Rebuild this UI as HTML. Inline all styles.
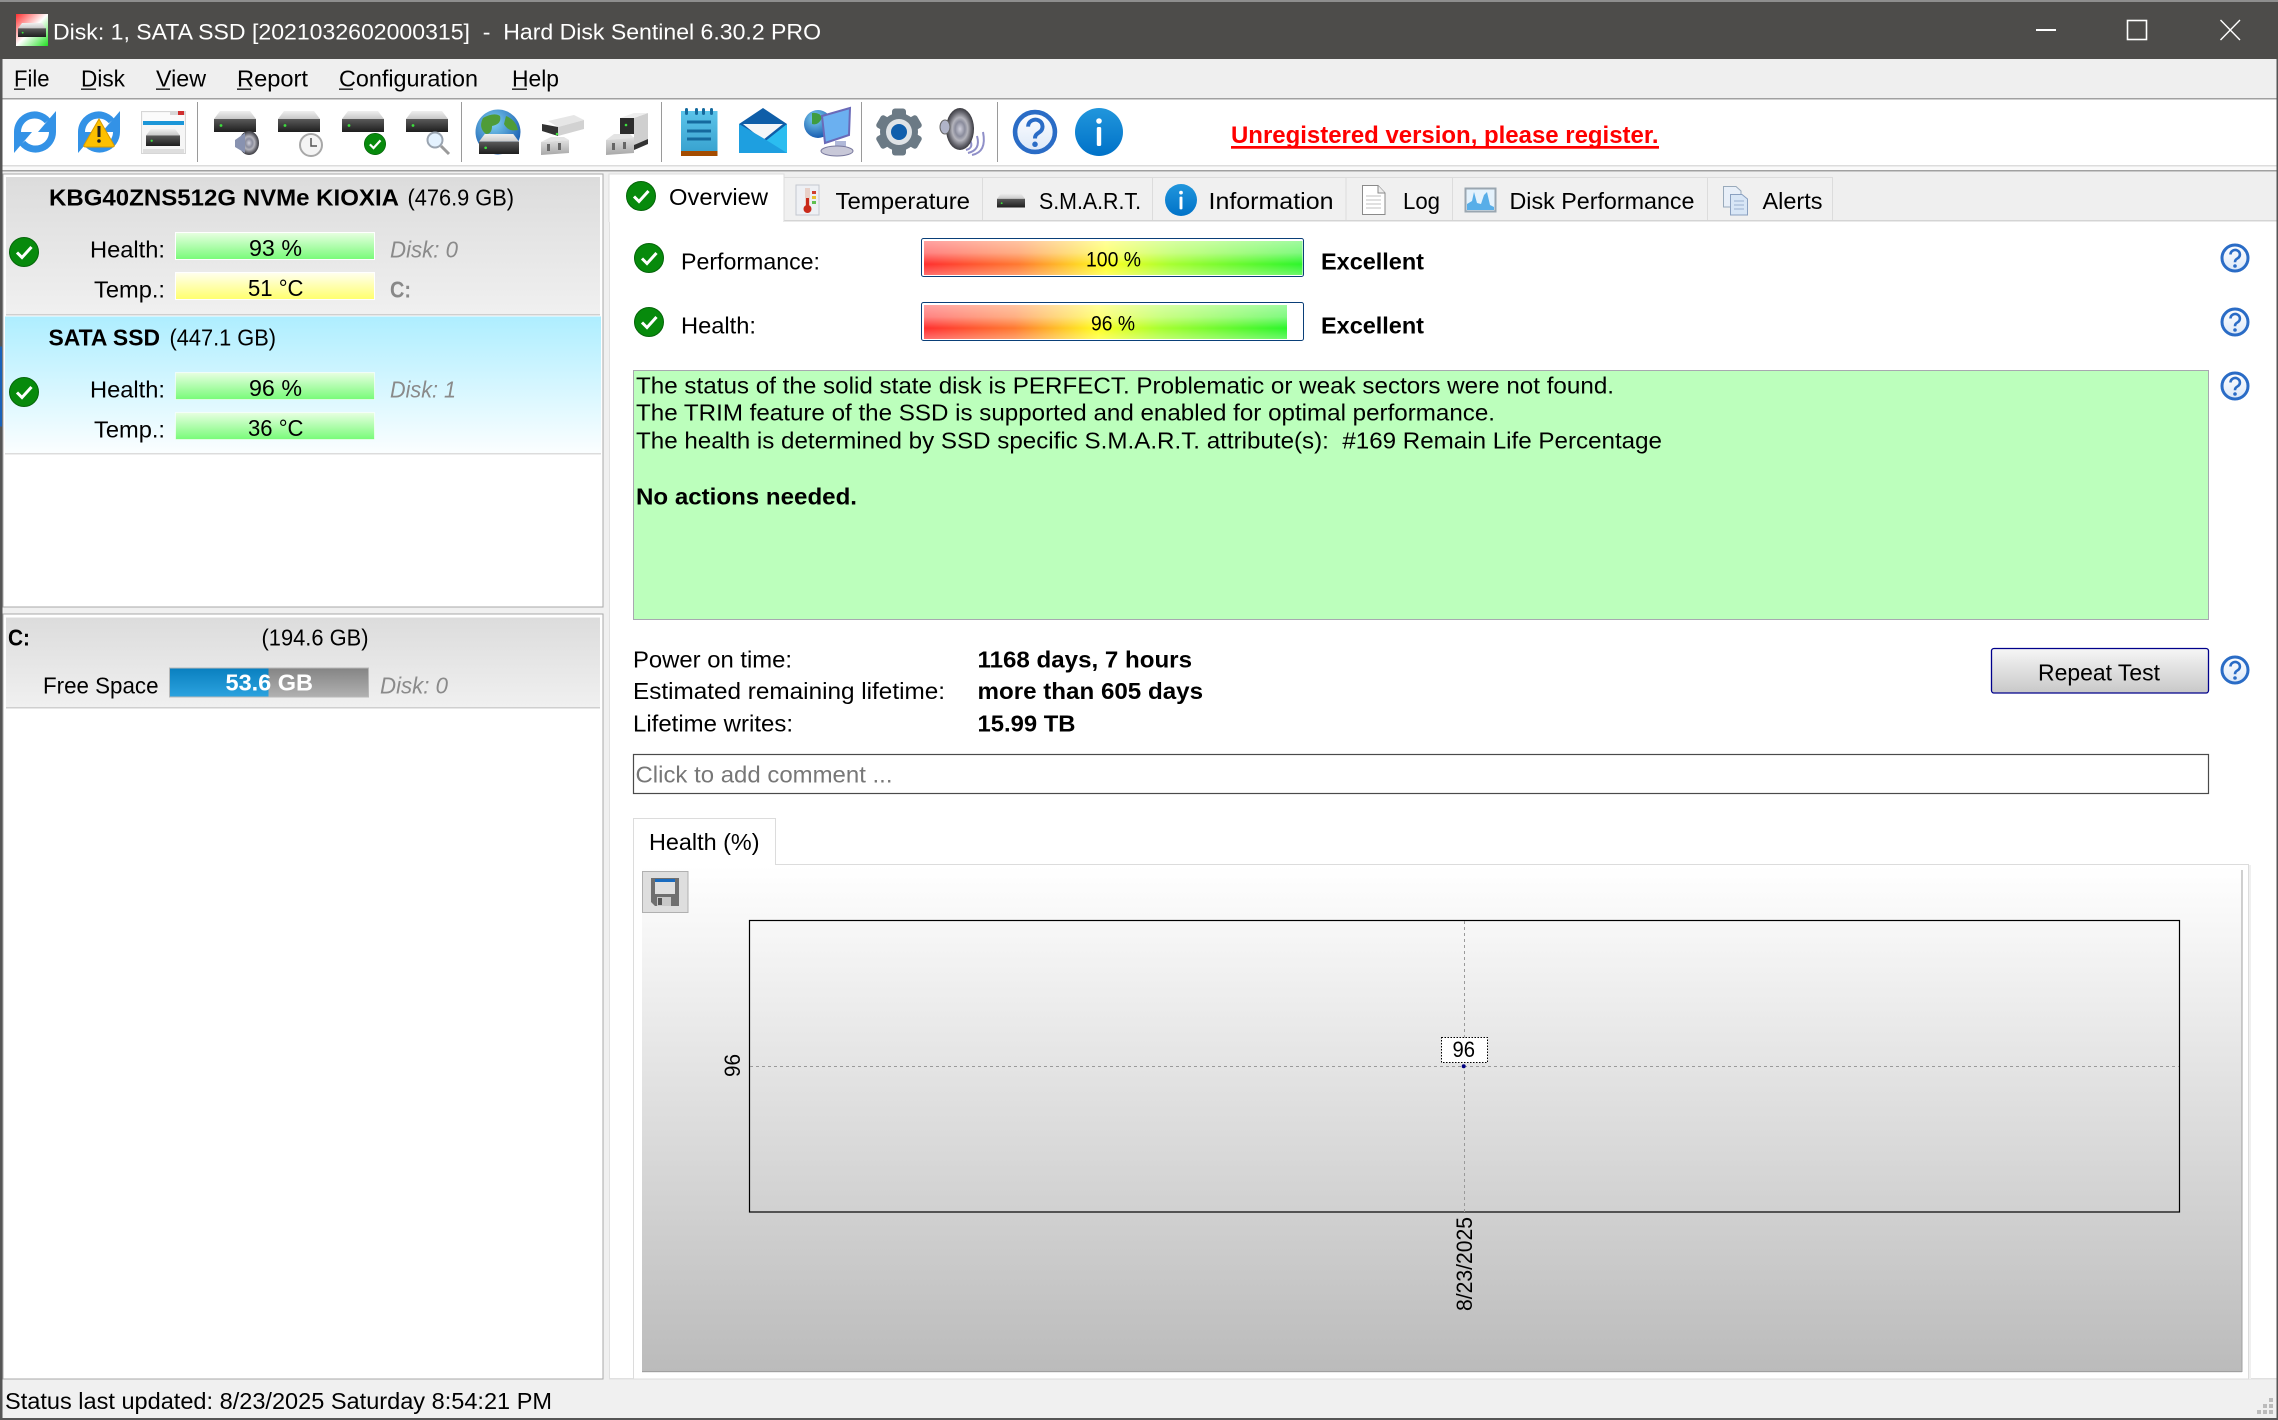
<!DOCTYPE html>
<html><head><meta charset="utf-8"><title>Hard Disk Sentinel</title>
<style>html,body{margin:0;padding:0;background:#f0f0f0;overflow:hidden}svg{display:block}
text{font-family:"Liberation Sans",sans-serif;font-size:23px;fill:#000;white-space:pre}
.b{font-weight:bold}.g{fill:#8a8a8a;font-style:italic}.t{fill:#fff}
</style></head><body>
<svg width="2278" height="1420" viewBox="0 0 2278 1420" xmlns="http://www.w3.org/2000/svg">
<defs>
<linearGradient id="vg" x1="0" y1="0" x2="0" y2="1"><stop offset="0" stop-color="#dcdcdc"/><stop offset="1" stop-color="#f0f0f0"/></linearGradient>
<linearGradient id="vb" x1="0" y1="0" x2="0" y2="1"><stop offset="0" stop-color="#aeeeff"/><stop offset="1" stop-color="#fbfeff"/></linearGradient>
<linearGradient id="gb" x1="0" y1="0" x2="0" y2="1"><stop offset="0" stop-color="#e8ffe2"/><stop offset="1" stop-color="#78fb78"/></linearGradient>
<linearGradient id="yb" x1="0" y1="0" x2="0" y2="1"><stop offset="0" stop-color="#fffff0"/><stop offset="1" stop-color="#ffff6c"/></linearGradient>
<linearGradient id="rg" x1="0" y1="0" x2="1" y2="0"><stop offset="0" stop-color="#ff2f2f"/><stop offset=".25" stop-color="#ff7a30"/><stop offset=".48" stop-color="#ffff20"/><stop offset=".65" stop-color="#a8ff30"/><stop offset="1" stop-color="#2cf52c"/></linearGradient>
<linearGradient id="sh" x1="0" y1="0" x2="0" y2="1"><stop offset="0" stop-color="#fff" stop-opacity=".55"/><stop offset=".35" stop-color="#fff" stop-opacity=".4"/><stop offset=".68" stop-color="#fff" stop-opacity="0"/><stop offset="1" stop-color="#fff" stop-opacity=".3"/></linearGradient>
<linearGradient id="chart" x1="0" y1="0" x2="0" y2="1"><stop offset="0" stop-color="#fff"/><stop offset="1" stop-color="#bbb"/></linearGradient>
<linearGradient id="btn" x1="0" y1="0" x2="0" y2="1"><stop offset="0" stop-color="#f6f6f6"/><stop offset="1" stop-color="#c8c8c8"/></linearGradient>
<linearGradient id="fb" x1="0" y1="0" x2="0" y2="1"><stop offset="0" stop-color="#0a80c0"/><stop offset="1" stop-color="#2ba2de"/></linearGradient>
<linearGradient id="fg" x1="0" y1="0" x2="0" y2="1"><stop offset="0" stop-color="#858585"/><stop offset="1" stop-color="#b0b0b0"/></linearGradient>
<linearGradient id="top" x1="0" y1="0" x2="0" y2="1"><stop offset="0" stop-color="#f0f0f0"/><stop offset="1" stop-color="#c8c8c8"/></linearGradient>
<linearGradient id="band" x1="0" y1="0" x2="0" y2="1"><stop offset="0" stop-color="#5a5a5a"/><stop offset="1" stop-color="#1e1e1e"/></linearGradient>
<linearGradient id="hp" x1="0" y1="0" x2="0" y2="1"><stop offset="0" stop-color="#fff"/><stop offset="1" stop-color="#dce8f8"/></linearGradient>
<linearGradient id="inf" x1="0" y1="0" x2="0" y2="1"><stop offset="0" stop-color="#2196dc"/><stop offset="1" stop-color="#0072c8"/></linearGradient>
<linearGradient id="note" x1="0" y1="0" x2="0" y2="1"><stop offset="0" stop-color="#5cc4ea"/><stop offset="1" stop-color="#39a3d0"/></linearGradient>
<linearGradient id="ic" x1="0" y1="0" x2="1" y2="1"><stop offset="0" stop-color="#ff3030"/><stop offset=".5" stop-color="#fff"/><stop offset="1" stop-color="#20e020"/></linearGradient>
<linearGradient id="tb" x1="0" y1="0" x2="0" y2="1"><stop offset="0" stop-color="#e0e0e0"/><stop offset="1" stop-color="#a8a8a8"/></linearGradient>
<radialGradient id="glb" cx=".4" cy=".3" r=".8"><stop offset="0" stop-color="#7fd0f0"/><stop offset="1" stop-color="#0a4da8"/></radialGradient>
<radialGradient id="spk" cx=".5" cy=".5" r=".5"><stop offset="0" stop-color="#d0d0dc"/><stop offset=".35" stop-color="#8a8c9c"/><stop offset=".55" stop-color="#b4b4bc"/><stop offset=".8" stop-color="#6a6a72"/><stop offset="1" stop-color="#3a3a40"/></radialGradient>

<symbol id="disk" viewBox="0 0 42 21"><path d="M6 0H36L42 8H0Z" fill="url(#top)"/><rect x="0" y="8" width="42" height="13" fill="url(#band)"/><circle cx="7" cy="14.500" r="1.400" fill="#3de03d"/></symbol>
<symbol id="chk" viewBox="0 0 30 30"><circle cx="15" cy="15" r="14.500" fill="#078a0c" stroke="#05650a"/><path d="M8 15.500L13 20.500L22.500 10" fill="none" stroke="#fff" stroke-width="3"/></symbol>
<symbol id="hlp" viewBox="0 0 30 30"><circle cx="15" cy="15" r="13" fill="url(#hp)" stroke="#2a6cc6" stroke-width="3"/><path d="M10.500 11.500a4.700 4.500 0 1 1 7.300 3.700c-1.800 1.200-2.800 1.900-2.800 4" fill="none" stroke="#2a6cc6" stroke-width="2.600"/><circle cx="15" cy="23" r="1.800" fill="#2a6cc6"/></symbol>
<symbol id="inf1" viewBox="0 0 48 48"><circle cx="24" cy="24" r="24" fill="url(#inf)"/><rect x="21.800" y="19" width="4.400" height="19" rx="1.500" fill="#fff"/><circle cx="24" cy="13" r="2.800" fill="#fff"/></symbol>
</defs>

<!-- frame -->
<rect width="2278" height="1420" fill="#f0f0f0"/>
<rect width="2278" height="59" fill="#4d4c4a"/>
<rect width="2278" height="2" fill="#8e8e8e"/>

<!-- title -->
<rect x="16" y="14" width="32" height="32" fill="url(#ic)"/>
<use href="#disk" x="18" y="23" width="28" height="14"/>
<text class="t" x="53" y="39.500" textLength="768" lengthAdjust="spacingAndGlyphs" style="font-size:22.500px">Disk: 1, SATA SSD [2021032602000315]  -  Hard Disk Sentinel 6.30.2 PRO</text>
<rect x="2036" y="29" width="20" height="2" fill="#fff"/>
<rect x="2127.500" y="20.500" width="19" height="19" fill="none" stroke="#fff" stroke-width="1.600"/>
<path d="M2220.500 20L2240 40M2240 20L2220.500 40" stroke="#fff" stroke-width="1.400" fill="none"/>

<!-- menu -->
<rect y="59" width="2278" height="39" fill="#efefef"/>
<rect y="98" width="2278" height="1.500" fill="#a0a0a0"/>
<text x="14" y="86.500" textLength="35.500" lengthAdjust="spacingAndGlyphs">File</text>
<text x="81" y="86.500" textLength="44" lengthAdjust="spacingAndGlyphs">Disk</text>
<text x="156" y="86.500" textLength="50" lengthAdjust="spacingAndGlyphs">View</text>
<text x="237" y="86.500" textLength="71" lengthAdjust="spacingAndGlyphs">Report</text>
<text x="339" y="86.500" textLength="139" lengthAdjust="spacingAndGlyphs">Configuration</text>
<text x="512" y="86.500" textLength="47" lengthAdjust="spacingAndGlyphs">Help</text>
<g fill="#000"><rect x="14" y="88.500" width="11" height="1.300"/><rect x="81" y="88.500" width="15" height="1.300"/><rect x="156" y="88.500" width="14" height="1.300"/><rect x="237" y="88.500" width="14" height="1.300"/><rect x="339" y="88.500" width="14" height="1.300"/><rect x="512" y="88.500" width="15" height="1.300"/></g>

<!-- toolbar -->
<rect y="99.500" width="2278" height="65.500" fill="#fff"/>
<rect y="165" width="2278" height="1.500" fill="#dcdcdc"/>
<rect y="166.500" width="2278" height="3.500" fill="#fafafa"/>
<rect y="170" width="2278" height="1.500" fill="#a0a0a0"/>
<g fill="#9a9a9a"><rect x="197" y="102" width="1" height="60"/><rect x="461" y="102" width="1" height="60"/><rect x="661" y="102" width="1" height="60"/><rect x="861" y="102" width="1" height="60"/><rect x="997" y="102" width="1" height="60"/></g>

<!-- refresh icons -->
<g fill="none" stroke="#3392e6" stroke-width="7"><path d="M17.500 132a17 17 0 0 1 30-11"/><path d="M52.500 132a17 17 0 0 1 -30 11"/></g>
<path d="M56 111V132H38Z" fill="#3392e6"/><path d="M14 153V132H32Z" fill="#3392e6"/>
<g fill="none" stroke="#3392e6" stroke-width="7"><path d="M81.500 132a17 17 0 0 1 30-11"/><path d="M116.500 132a17 17 0 0 1 -30 11"/></g>
<path d="M120 111V132H102Z" fill="#3392e6"/><path d="M78 153V132H96Z" fill="#3392e6"/>
<path d="M99 119L114 145Q115 147 112 147H86Q83 147 84 145Z" fill="#fdc000" stroke="#d99a00"/><rect x="97.500" y="126" width="3" height="11" fill="#222"/><circle cx="99" cy="141" r="1.800" fill="#222"/>
<!-- window disk -->
<rect x="141.500" y="111.500" width="44" height="42" fill="#f6f6f6" stroke="#d6d6d6"/><rect x="143" y="113" width="41" height="8" fill="#fbfbfb"/><rect x="143" y="121" width="41" height="4" fill="#1b96d8"/><rect x="170" y="111" width="15" height="4" fill="#d8d8d8"/><rect x="178" y="111" width="6" height="4" fill="#d03030"/><rect x="143" y="149" width="41" height="4" fill="#dedede"/>
<use href="#disk" x="146" y="129" width="34" height="17"/>
<!-- disks -->
<use href="#disk" x="214" y="111" width="42" height="21"/>
<use href="#disk" x="278" y="111" width="42" height="21"/>
<use href="#disk" x="342" y="111" width="42" height="21"/>
<use href="#disk" x="406" y="111" width="42" height="21"/>
<ellipse cx="249" cy="143" rx="10" ry="12" fill="url(#spk)"/><path d="M235 140L245 133V153L235 147Z" fill="#8892b0"/>
<circle cx="311" cy="145" r="11" fill="#f4f4f4" stroke="#a8a8a8" stroke-width="2"/><path d="M311 138V146H317" fill="none" stroke="#555" stroke-width="1.500"/>
<use href="#chk" x="364" y="133" width="22" height="22"/>
<circle cx="435" cy="140" r="7.500" fill="#e4f2ff" stroke="#9aa4b0" stroke-width="2"/><path d="M441 146L449 154" stroke="#9a9a9a" stroke-width="3"/>
<!-- globe disk -->
<circle cx="498" cy="132" r="22.500" fill="url(#glb)"/><path d="M483 118Q494 112 500 116Q502 124 492 126Q492 134 486 134Q478 128 483 118ZM506 116Q516 120 518 130Q508 132 504 124Z" fill="#4f9c38"/>
<use href="#disk" x="478" y="134" width="42" height="20"/>
<!-- toolbox disk -->
<path d="M548 121L574 115L584 120L558 127Z" fill="#e6e6e6"/><path d="M558 127L584 120V129L558 136Z" fill="#d2d2d2"/><path d="M542 124L558 127V136L542 131Z" fill="#333"/><circle cx="557" cy="134" r="1.300" fill="#3de03d"/>
<path d="M541 142L569 140V153L541 155Z" fill="url(#tb)"/><path d="M541 142L551 137H564L569 140Z" fill="#e4e4e4"/><rect x="547" y="144" width="3" height="7" fill="#666"/><rect x="558" y="143" width="3" height="7" fill="#666"/>
<!-- tower -->
<path d="M606 140L634 137V153L606 155Z" fill="url(#tb)"/><path d="M606 140L614 134H630L634 138Z" fill="#e4e4e4"/><rect x="612" y="143" width="3" height="7" fill="#666"/><rect x="623" y="142" width="3" height="7" fill="#666"/>
<path d="M634 118L648 113V140L634 146Z" fill="#cfcfcf"/><path d="M620 118L634 113H648L634 118Z" fill="#eee"/><path d="M620 118H634V134H620Z" fill="#2c2c2c"/><circle cx="626" cy="125" r="1.300" fill="#3de03d"/><path d="M634 145L648 139V144L634 150Z" fill="#333"/>
<!-- notepad -->
<rect x="681" y="111" width="36.500" height="40" fill="url(#note)"/><rect x="681" y="151" width="36.500" height="5" fill="#a44c00"/>
<g fill="#156a9e"><rect x="685" y="108" width="3" height="7" rx="1.500"/><rect x="695" y="108" width="3" height="7" rx="1.500"/><rect x="702" y="108" width="3" height="7" rx="1.500"/><rect x="710" y="108" width="3" height="7" rx="1.500"/><rect x="687" y="120.500" width="24" height="3"/><rect x="687" y="129.500" width="24" height="3"/><rect x="687" y="137.500" width="24" height="3"/></g>
<!-- mail -->
<path d="M739 124L763 108L787 124V153H739Z" fill="#0f5ea8"/><path d="M743 124H783L763 140Z" fill="#f4f6f8"/>
<path d="M739 124L763 143L787 124V153H739Z" fill="#2bbdf0"/><path d="M739 124V153H787L763 138Z" fill="#1e9fe0"/>
<!-- monitor -->
<circle cx="818" cy="124" r="14" fill="url(#glb)"/><path d="M812 113Q820 112 822 118Q818 126 812 124Z" fill="#3f9c3f"/>
<path d="M822 116L850 108L849 135L825 143Z" fill="#6bb0f0" stroke="#6a6ab8" stroke-width="2"/><path d="M835 141H846V148H835Z" fill="#b0b8d8"/><ellipse cx="837" cy="151" rx="16" ry="5" fill="#c8c8d8" stroke="#77779c"/>
<!-- gear -->
<g fill="#6b7a85"><circle cx="899" cy="132" r="19"/><rect x="892" y="108.500" width="14" height="47" rx="3"/><rect x="892" y="108.500" width="14" height="47" rx="3" transform="rotate(60 899 132)"/><rect x="892" y="108.500" width="14" height="47" rx="3" transform="rotate(120 899 132)"/></g>
<circle cx="899" cy="132" r="13" fill="#dfe3e6"/><circle cx="899" cy="132" r="8" fill="#0f5eac"/>
<!-- speaker big -->
<path d="M970 140Q974 148 966 150M977 136Q981 150 968 153M983 132Q987 152 972 155" fill="none" stroke="#8f8fc8" stroke-width="2"/>
<ellipse cx="960" cy="129" rx="14" ry="21" fill="url(#spk)"/><ellipse cx="945" cy="127" rx="5" ry="7" fill="#b0b4c8" stroke="#666"/>
<use href="#hlp" x="1012" y="109" width="46" height="46"/>
<use href="#inf1" x="1075" y="108" width="48" height="48"/>

<text class="b" x="1231" y="143" textLength="427.500" lengthAdjust="spacingAndGlyphs" style="fill:#f00;font-size:24px">Unregistered version, please register.</text>
<rect x="1231" y="146" width="428" height="2.700" fill="#f00"/>

<!-- left lists -->
<rect x="3" y="174" width="600" height="433" fill="#fff" stroke="#a8a8a8"/>
<rect x="6" y="177" width="594" height="137" fill="url(#vg)"/>
<rect x="6" y="314" width="594" height="1.500" fill="#cfcfcf"/>
<rect x="5" y="316.500" width="596" height="137" fill="url(#vb)"/>
<rect x="5" y="453" width="596" height="1.500" fill="#dcdcdc"/>

<text class="b" x="49" y="205.500" textLength="350" lengthAdjust="spacingAndGlyphs">KBG40ZNS512G NVMe KIOXIA</text>
<text x="407.500" y="205.500" textLength="106.500" lengthAdjust="spacingAndGlyphs">(476.9 GB)</text>
<use href="#chk" x="9" y="237" width="30" height="30"/>
<text x="90" y="257.500" textLength="75" lengthAdjust="spacingAndGlyphs">Health:</text>
<rect x="175.500" y="232.500" width="199" height="27" fill="url(#gb)" stroke="#fff"/>
<text x="249" y="256" textLength="53" lengthAdjust="spacingAndGlyphs">93 %</text>
<text class="g" x="390" y="257.500" textLength="68" lengthAdjust="spacingAndGlyphs">Disk: 0</text>
<text x="94" y="297.500" textLength="71" lengthAdjust="spacingAndGlyphs">Temp.:</text>
<rect x="175.500" y="272.500" width="199" height="27" fill="url(#yb)" stroke="#fff"/>
<text x="248" y="296" textLength="55.500" lengthAdjust="spacingAndGlyphs">51 °C</text>
<text class="b" x="390" y="297.500" textLength="21" lengthAdjust="spacingAndGlyphs" style="fill:#888">C:</text>

<text class="b" x="48.500" y="345.500" textLength="111.500" lengthAdjust="spacingAndGlyphs">SATA SSD</text>
<text x="169.500" y="345.500" textLength="106.500" lengthAdjust="spacingAndGlyphs">(447.1 GB)</text>
<use href="#chk" x="9" y="377" width="30" height="30"/>
<text x="90" y="397.500" textLength="75" lengthAdjust="spacingAndGlyphs">Health:</text>
<rect x="175.500" y="372.500" width="199" height="27" fill="url(#gb)" stroke="#fff" stroke-opacity=".6"/>
<text x="249" y="396" textLength="53" lengthAdjust="spacingAndGlyphs">96 %</text>
<text class="g" x="390" y="397.500" textLength="66" lengthAdjust="spacingAndGlyphs">Disk: 1</text>
<text x="94" y="437.500" textLength="71" lengthAdjust="spacingAndGlyphs">Temp.:</text>
<rect x="175.500" y="412.500" width="199" height="27" fill="url(#gb)" stroke="#fff" stroke-opacity=".6"/>
<text x="248" y="436" textLength="55.500" lengthAdjust="spacingAndGlyphs">36 °C</text>

<rect x="3" y="614" width="600" height="765" fill="#fff" stroke="#a8a8a8"/>
<rect x="6" y="617.500" width="594" height="90" fill="url(#vg)"/>
<rect x="6" y="707" width="594" height="1.500" fill="#cfcfcf"/>
<text class="b" x="8" y="645.500" textLength="22" lengthAdjust="spacingAndGlyphs">C:</text>
<text x="261.500" y="645.500" textLength="107" lengthAdjust="spacingAndGlyphs">(194.6 GB)</text>
<text x="43" y="693.500" textLength="115.500" lengthAdjust="spacingAndGlyphs">Free Space</text>
<rect x="169" y="667.500" width="200" height="30" fill="#b8b8b8"/>
<rect x="170" y="668.500" width="98.500" height="28" fill="url(#fb)"/>
<rect x="268.500" y="668.500" width="99.500" height="28" fill="url(#fg)"/>
<text class="b t" x="225.500" y="690.500" textLength="87.500" lengthAdjust="spacingAndGlyphs">53.6 GB</text>
<text class="g" x="380" y="693.500" textLength="68" lengthAdjust="spacingAndGlyphs">Disk: 0</text>

<!-- right page -->
<rect x="608.500" y="171.500" width="1668" height="49" fill="#efefef"/>
<rect x="608.500" y="220" width="1668" height="1.500" fill="#d4d4d4"/>
<rect x="609" y="221.500" width="1667.500" height="1157.500" fill="#fff"/>
<rect x="609" y="221" width="1" height="1158" fill="#e0e0e0"/>
<rect x="609" y="1378" width="1668" height="1.500" fill="#e0e0e0"/>

<!-- tabs -->
<rect x="784" y="178" width="1048.500" height="42" fill="#f0f0f0"/>
<path d="M784 177.500H1832.500V220" fill="none" stroke="#dcdcdc"/>
<g fill="#dcdcdc"><rect x="982" y="178" width="1" height="42"/><rect x="1152" y="178" width="1" height="42"/><rect x="1345.500" y="178" width="1" height="42"/><rect x="1452" y="178" width="1" height="42"/><rect x="1707" y="178" width="1" height="42"/></g>
<path d="M609 222V174H784V221" fill="#fff" stroke="#dcdcdc"/>
<rect x="610" y="218" width="173" height="5" fill="#fff"/>
<use href="#chk" x="626" y="181" width="30" height="30"/>
<text x="669" y="205" textLength="99" lengthAdjust="spacingAndGlyphs">Overview</text>

<!-- thermometer -->
<rect x="796" y="185" width="23" height="30" fill="#eef0f4" stroke="#c4c8d0"/><rect x="805" y="188" width="5" height="19" fill="#e8d0c8"/><rect x="806" y="198" width="3" height="11" fill="#c92a1a"/><circle cx="807.500" cy="209" r="4" fill="#c92a1a"/><rect x="812" y="191" width="4" height="3" fill="#d04030"/><rect x="812" y="196" width="4" height="3" fill="#e8c030"/><rect x="812" y="201" width="4" height="3" fill="#60c050"/>
<text x="835.500" y="209" textLength="134.500" lengthAdjust="spacingAndGlyphs">Temperature</text>
<use href="#disk" x="997" y="193" width="28" height="15"/>
<text x="1039" y="209" textLength="102" lengthAdjust="spacingAndGlyphs">S.M.A.R.T.</text>
<use href="#inf1" x="1165" y="184" width="32" height="32"/>
<text x="1208.500" y="209" textLength="125" lengthAdjust="spacingAndGlyphs">Information</text>
<!-- log icon -->
<path d="M1362.500 185.500H1378L1385 193V214.500H1362.500Z" fill="#fff" stroke="#8a8a8a"/><path d="M1378 185.500V193H1385" fill="#eee" stroke="#8a8a8a"/><path d="M1366 196H1381M1366 200H1381M1366 204H1381M1366 208H1381" stroke="#c0c0c0"/>
<text x="1403" y="209" textLength="37" lengthAdjust="spacingAndGlyphs">Log</text>
<!-- perf icon -->
<rect x="1465.500" y="188.500" width="30" height="23" fill="#e4f2fc" stroke="#9aa6b0" stroke-width="2"/><path d="M1467 210V204L1472 201L1474 192L1477 203L1481 204L1484 195L1487 192L1490 205L1494 207V210Z" fill="#58aee8"/>
<text x="1509.500" y="209" textLength="185" lengthAdjust="spacingAndGlyphs">Disk Performance</text>
<!-- alerts icon -->
<path d="M1723.500 186.500H1736L1741 191V207H1723.500Z" fill="#e8eff8" stroke="#9ab"/><path d="M1730.500 194.500H1742L1747.500 199V215H1730.500Z" fill="#d8e6f6" stroke="#8aa0c0"/><path d="M1734 201H1744M1734 205H1744M1734 209H1744" stroke="#9ab0d0"/>
<text x="1762.500" y="209" textLength="60" lengthAdjust="spacingAndGlyphs">Alerts</text>

<!-- performance -->
<use href="#chk" x="634" y="243" width="30" height="30"/>
<text x="681" y="269.500" textLength="139" lengthAdjust="spacingAndGlyphs">Performance:</text>
<rect x="921.500" y="238.500" width="382" height="38" rx="2" fill="#fff" stroke="#0a3f78"/>
<rect x="924" y="241" width="378.500" height="34" fill="url(#rg)"/><rect x="924" y="241" width="378.500" height="34" fill="url(#sh)"/>
<text x="1086" y="266.500" textLength="55" lengthAdjust="spacingAndGlyphs" style="font-size:21px">100 %</text>
<text class="b" x="1321" y="269.500" textLength="103" lengthAdjust="spacingAndGlyphs">Excellent</text>
<use href="#hlp" x="2220" y="243" width="30" height="30"/>

<use href="#chk" x="634" y="307" width="30" height="30"/>
<text x="681" y="333.500" textLength="75" lengthAdjust="spacingAndGlyphs">Health:</text>
<rect x="921.500" y="302.500" width="382" height="38" rx="2" fill="#fff" stroke="#0a3f78"/>
<rect x="924" y="305" width="363" height="34" fill="url(#rg)"/><rect x="924" y="305" width="363" height="34" fill="url(#sh)"/>
<text x="1091" y="330.500" textLength="44" lengthAdjust="spacingAndGlyphs" style="font-size:21px">96 %</text>
<text class="b" x="1321" y="333.500" textLength="103" lengthAdjust="spacingAndGlyphs">Excellent</text>
<use href="#hlp" x="2220" y="307" width="30" height="30"/>

<!-- status box -->
<rect x="633.500" y="370.500" width="1575" height="249" fill="#bcffbc" stroke="#a8a8b0"/>
<text x="636" y="393.500" textLength="978" lengthAdjust="spacingAndGlyphs">The status of the solid state disk is PERFECT. Problematic or weak sectors were not found.</text>
<text x="636" y="420.500" textLength="859" lengthAdjust="spacingAndGlyphs">The TRIM feature of the SSD is supported and enabled for optimal performance.</text>
<text x="636" y="448.500" textLength="1026" lengthAdjust="spacingAndGlyphs">The health is determined by SSD specific S.M.A.R.T. attribute(s):  #169 Remain Life Percentage</text>
<text class="b" x="636" y="504.500" textLength="221" lengthAdjust="spacingAndGlyphs">No actions needed.</text>
<use href="#hlp" x="2220" y="371" width="30" height="30"/>

<!-- info -->
<text x="633" y="667.500" textLength="159" lengthAdjust="spacingAndGlyphs">Power on time:</text>
<text x="633" y="699" textLength="312" lengthAdjust="spacingAndGlyphs">Estimated remaining lifetime:</text>
<text x="633" y="731.500" textLength="160" lengthAdjust="spacingAndGlyphs">Lifetime writes:</text>
<text class="b" x="977.500" y="667.500" textLength="214.500" lengthAdjust="spacingAndGlyphs">1168 days, 7 hours</text>
<text class="b" x="977.500" y="699" textLength="225.500" lengthAdjust="spacingAndGlyphs">more than 605 days</text>
<text class="b" x="977.500" y="731.500" textLength="98" lengthAdjust="spacingAndGlyphs">15.99 TB</text>
<rect x="1991.500" y="648.500" width="217" height="44.500" rx="2.500" fill="url(#btn)" stroke="#00008b" stroke-width="1.300"/>
<text x="2038" y="680.500" textLength="122" lengthAdjust="spacingAndGlyphs">Repeat Test</text>
<use href="#hlp" x="2220" y="655" width="30" height="30"/>
<rect x="633.500" y="754.500" width="1575" height="39" fill="#fff" stroke="#4a4a4a" stroke-width="1.200"/>
<text x="635.500" y="782.500" textLength="257" lengthAdjust="spacingAndGlyphs" style="fill:#777">Click to add comment ...</text>

<!-- chart tab -->
<path d="M633.500 1379V818.500H775.500V864.500H2248.500V1379H633.500" fill="#fff" stroke="#dcdcdc"/>
<rect x="2249" y="865" width="2" height="514" fill="#f0f0f0"/>
<text x="649" y="850" textLength="110.500" lengthAdjust="spacingAndGlyphs">Health (%)</text>
<rect x="642" y="866" width="1600" height="506" fill="url(#chart)"/>
<rect x="2241.500" y="870" width="1" height="502" fill="#a0a0a0"/>
<rect x="642" y="1371" width="1600" height="1.200" fill="#a0a0a0"/>
<rect x="642.500" y="871.500" width="45.500" height="41" fill="#dedede" stroke="#b0b0b0"/>
<path d="M651 878H679V906H655L651 902Z" fill="#6f6f6f"/><rect x="655" y="879" width="20" height="3" fill="#1a6cc0"/><rect x="655" y="882" width="20" height="12" fill="#e0e0e0"/><rect x="657" y="897" width="14" height="9" fill="#c8c8c8"/><rect x="658" y="898" width="4" height="7" fill="#555"/>

<rect x="749.500" y="920.500" width="1430" height="291.500" fill="none" stroke="#000" stroke-width="1.200"/>
<path d="M750 1066.500H2179M1464.500 921V1212" stroke="#9a9a9a" stroke-dasharray="3 3" fill="none"/>
<rect x="1441.500" y="1037.500" width="46" height="25" fill="#fff" stroke="#000" stroke-dasharray="1.500 1.500"/>
<text x="1452.500" y="1057" textLength="22.500" lengthAdjust="spacingAndGlyphs" style="font-size:22px">96</text>
<circle cx="1463.700" cy="1066.200" r="2" fill="#000080"/>
<text transform="translate(740 1077) rotate(-90)" textLength="23" lengthAdjust="spacingAndGlyphs" style="font-size:22px">96</text>
<text transform="translate(1472 1311) rotate(-90)" textLength="94" lengthAdjust="spacingAndGlyphs" style="font-size:22px">8/23/2025</text>

<!-- status bar -->
<rect y="1380" width="2278" height="38" fill="#f0f0f0"/>
<text x="5" y="1409" textLength="547" lengthAdjust="spacingAndGlyphs">Status last updated: 8/23/2025 Saturday 8:54:21 PM</text>
<g fill="#bbb"><rect x="2257" y="1410" width="4" height="4"/><rect x="2263" y="1410" width="4" height="4"/><rect x="2269" y="1410" width="4" height="4"/><rect x="2263" y="1404" width="4" height="4"/><rect x="2269" y="1404" width="4" height="4"/><rect x="2269" y="1398" width="4" height="4"/></g>

<!-- borders -->
<rect x="0" y="59" width="2.500" height="1361" fill="#555"/>
<rect x="0" y="346.500" width="2" height="80" fill="#1a62b8"/>
<rect x="2276.500" y="59" width="1.500" height="1361" fill="#555"/>
<rect y="1418" width="2278" height="2" fill="#555"/>
</svg>
</body></html>
